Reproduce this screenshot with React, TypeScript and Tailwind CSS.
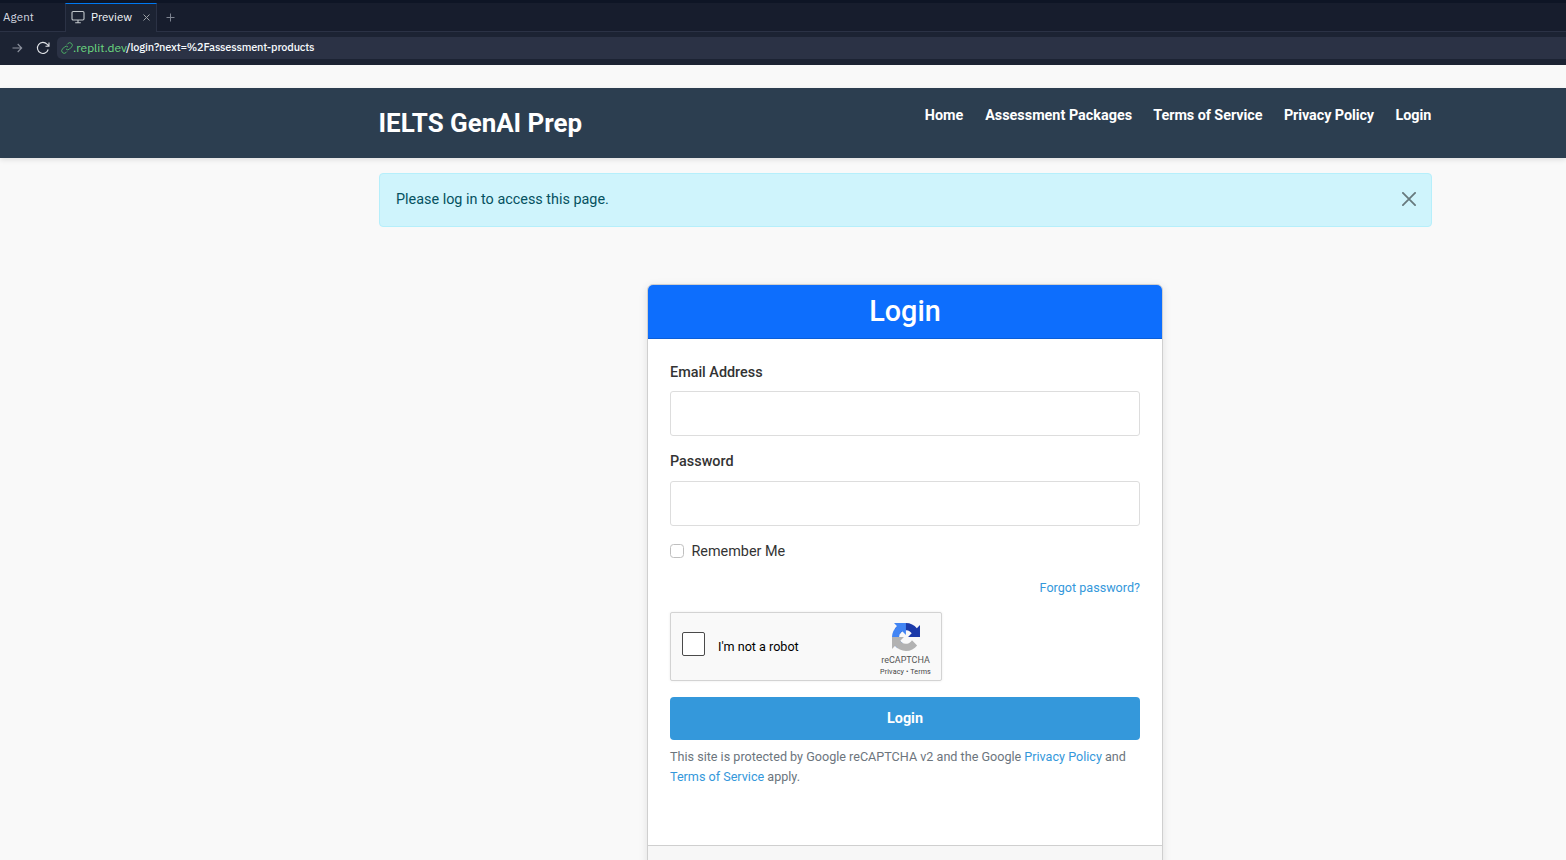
import React from "react";

const navItems = [
  { label: "Home", style: "w-[38.8px] tracking-normal" },
  { label: "Assessment Packages", style: "w-[146.6px] tracking-normal" },
  { label: "Terms of Service", style: "w-[109px] tracking-[-0.06px]" },
  { label: "Privacy Policy", style: "w-[90px] tracking-[-0.08px]" },
  { label: "Login", style: "w-[36px] tracking-[-0.05px]" },
];

function BrowserChrome() {
  return (
    <div className="h-[65px] shrink-0 bg-[#1c2333] font-['IBM_Plex_Sans','Inter',sans-serif] text-[11.5px] text-[#f5f9fc]">
      <div className="h-[3px] bg-[#0e1525]" />
      <div className="flex h-[29px] border-b border-[#2b3245] bg-[#171d2d]">
        <div className="flex w-[65px] items-center pl-[3px] text-[#d5d9e0]">
          <span className="tracking-[0.15px]">Agent</span>
        </div>
        <div className="flex h-[29px] w-[92px] items-center border-x border-t border-x-[#2b3245] border-t-[#0079f2] bg-[#1c2333] pb-[2px] pl-[5px]">
          <svg className="h-[14px] w-[14px] shrink-0" viewBox="0 0 14 14" fill="none" stroke="#c2c8cc" strokeWidth="1.1">
            <rect x="1" y="1.5" width="12" height="8.5" rx="1.2" />
            <path d="M7 10v2.5M4.2 12.7h5.6" />
          </svg>
          <span className="ml-[6px] w-[42px] whitespace-nowrap tracking-[0.03px]">Preview</span>
          <svg className="ml-[9px] h-[9px] w-[9px]" viewBox="0 0 9 9" stroke="#9da2a6">
            <path d="M1.5 1.5l6 6M7.5 1.5l-6 6" />
          </svg>
        </div>
        <div className="flex items-center pl-[9px]">
          <svg className="h-[9px] w-[9px]" viewBox="0 0 9 9" stroke="#7d8390">
            <path d="M4.5 .5v8M.5 4.5h8" />
          </svg>
        </div>
      </div>
      <div className="flex h-[31px] items-center">
        <svg className="ml-[11px] h-[12px] w-[12px]" viewBox="0 0 12 12" fill="none" stroke="#8d939f" strokeWidth="1.1">
          <path d="M1.5 6h9M6.7 2l4 4-4 4" />
        </svg>
        <svg className="ml-[13px] h-[14px] w-[14px]" viewBox="0 0 14 14" fill="none" stroke="#e1e4e8" strokeWidth="1.1">
          <path d="M12.2 8.5A5.5 5.5 0 1 1 11 3.2l2 2M13 1.5v3.7H9.5" />
        </svg>
        <div className="ml-[7px] flex h-[22px] flex-1 items-center rounded-l-[5px] bg-[#2b3245] pl-[4px]">
          <svg className="h-[12px] w-[12px]" viewBox="0 0 24 24" fill="none" stroke="#4cad65" strokeWidth="2">
            <path d="M10 14a5 5 0 0 0 7.1 0l4-4A5 5 0 0 0 14 2.900l-2 2M14 10a5 5 0 0 0-7.100 0l-4 4A5 5 0 0 0 10 21.100l2-2" />
          </svg>
          <span className="w-[53px] whitespace-nowrap text-[12px] tracking-[-0.02px] text-[#6bd980]">.replit.dev</span>
          <span className="whitespace-nowrap text-[11px] font-medium tracking-[-0.2px]">/login?next=%2Fassessment-products</span>
        </div>
      </div>
    </div>
  );
}

function Recaptcha() {
  return (
    <div className="mt-[14px] flex h-[69px] w-[272px] rounded-[2px] border border-[#d3d3d3] bg-[#f9f9f9] shadow-[0_0_3px_rgba(0,0,0,0.08)]">
      <div className="ml-[11px] mt-[19px] h-[24px] w-[23px] rounded-[2px] border border-[#4a4a4a] bg-white" />
      <span className="ml-[13px] mt-[24px] w-[140px] text-[12.6px] leading-[20px] text-black">I'm not a robot</span>
      <div className="ml-[17.5px] flex w-[60px] flex-col items-center">
        <svg className="mt-[10px] h-[28px] w-[28px] shrink-0" viewBox="0 0 64 64">
          <path fill="#1c3aa9" d="M64 31.955l-.033-1.370V4.687l-7.160 7.160C50.948 4.674 42.033.093 32.050.093c-10.400 0-19.622 4.960-25.458 12.640l11.736 11.860a15.550 15.550 0 0 1 4.754-5.334c2.050-1.600 4.952-2.906 8.968-2.906.485 0 .860.057 1.135.163 4.976.393 9.288 3.140 11.828 7.124l-8.307 8.307L64 31.953" />
          <path fill="#4285f4" d="M31.862.094l-1.370.033H4.594l7.160 7.160C4.580 13.147 0 22.060 0 32.046c0 10.400 4.960 19.622 12.640 25.458L24.500 45.768a15.550 15.550 0 0 1-5.334-4.754c-1.600-2.050-2.906-4.952-2.906-8.968 0-.485.057-.860.163-1.135.393-4.976 3.140-9.288 7.124-11.828l8.307 8.307L31.860.095" />
          <path fill="#b2b2b2" d="M.001 32.045l.033 1.370v25.898l7.160-7.160c5.860 7.173 14.774 11.754 24.760 11.754 10.400 0 19.622-4.960 25.458-12.640l-11.736-11.860a15.550 15.550 0 0 1-4.754 5.334c-2.050 1.600-4.952 2.906-8.968 2.906-.485 0-.860-.057-1.135-.163-4.976-.393-9.288-3.140-11.828-7.124l8.307-8.307c-10.522.040-22.400.066-27.295-.005" />
        </svg>
        <span className="mt-[4px] text-[9px] leading-[11px] text-[#555]">reCAPTCHA</span>
        <span className="whitespace-nowrap text-[7.2px] leading-[11px] tracking-[0.1px] text-[#444]">Privacy <span>•</span> Terms</span>
      </div>
    </div>
  );
}

export default function App() {
  return (
    <div className="flex h-[860px] w-[1566px] flex-col overflow-hidden bg-[#f9f9f9] font-['Roboto',sans-serif] text-[14.4px] text-[#333]">
      <BrowserChrome />
      <header className="mt-[23px] h-[70px] shrink-0 bg-[#2c3e50] shadow-[0_2px_5px_rgba(0,0,0,0.1)]">
        <div className="ml-[378.5px] flex w-[1053px] justify-between text-white">
          <h1 className="mt-[17px] whitespace-nowrap text-[25.92px] font-bold leading-[36px]">IELTS GenAI Prep</h1>
          <nav className="mt-[16px] flex gap-[21.6px] leading-[23px]">
            {navItems.map((item) => (
              <a key={item.label} className={`${item.style} whitespace-nowrap font-bold`}>{item.label}</a>
            ))}
          </nav>
        </div>
      </header>
      <div className="ml-[379px] mt-[15px] flex h-[54px] w-[1053px] shrink-0 items-center justify-between rounded-[4px] border border-[#b6effb] bg-[#cff4fc] pl-[16px] pr-[15px] text-[#055160]">
        <span>Please log in to access this page.</span>
        <svg className="mb-[2px] h-[14px] w-[14px]" viewBox="0 0 14 14" stroke="#67797d" strokeWidth="1.8" strokeLinecap="round">
          <path d="M.9.900l12.200 12.200M13.100.900L.900 13.100" />
        </svg>
      </div>
      <main className="ml-[647px] mt-[57px] h-[640px] w-[516px] shrink-0 rounded-[6px] border border-[#cfcfcf] bg-white shadow-[0_2px_8px_rgba(0,0,0,0.1)]">
        <h2 className="h-[54px] rounded-t-[5px] border-b border-[#0b5ed7] bg-[#0d6efd] text-center text-[28.8px] font-medium leading-[52px] text-white">Login</h2>
        <form className="flex h-[506px] flex-col px-[22px] pt-[22px]">
          <label className="font-medium leading-[23px]">Email Address</label>
          <div className="mt-[7px] h-[45px] shrink-0 rounded-[3px] border border-[#ddd]" />
          <label className="mt-[14px] font-medium leading-[23px]">Password</label>
          <div className="mt-[8px] h-[45px] shrink-0 rounded-[3px] border border-[#ddd]" />
          <label className="mt-[14px] flex items-center leading-[23px]">
            <span className="mb-[1px] mr-[7.5px] h-[14px] w-[14px] rounded-[3.5px] border border-[#bfbfbf] bg-white" />
            Remember Me
          </label>
          <a className="mt-[15px] self-end text-[12.6px] leading-[20px] text-[#3498db]">Forgot password?</a>
          <Recaptcha />
          <button type="button" className="mt-[16px] h-[43px] shrink-0 rounded-[4px] bg-[#3498db] font-bold text-white">Login</button>
          <p className="mt-[7px] whitespace-nowrap text-[12.6px] leading-[20px] text-[#6c757d]">
            This site is protected by Google reCAPTCHA v2 and the Google <a className="text-[#3498db]">Privacy Policy</a> and
            <br />
            <a className="text-[#3498db]">Terms of Service</a> apply.
          </p>
        </form>
        <div className="h-[78px] border-t border-[#cfcfcf] bg-[#f7f7f7]" />
      </main>
    </div>
  );
}
